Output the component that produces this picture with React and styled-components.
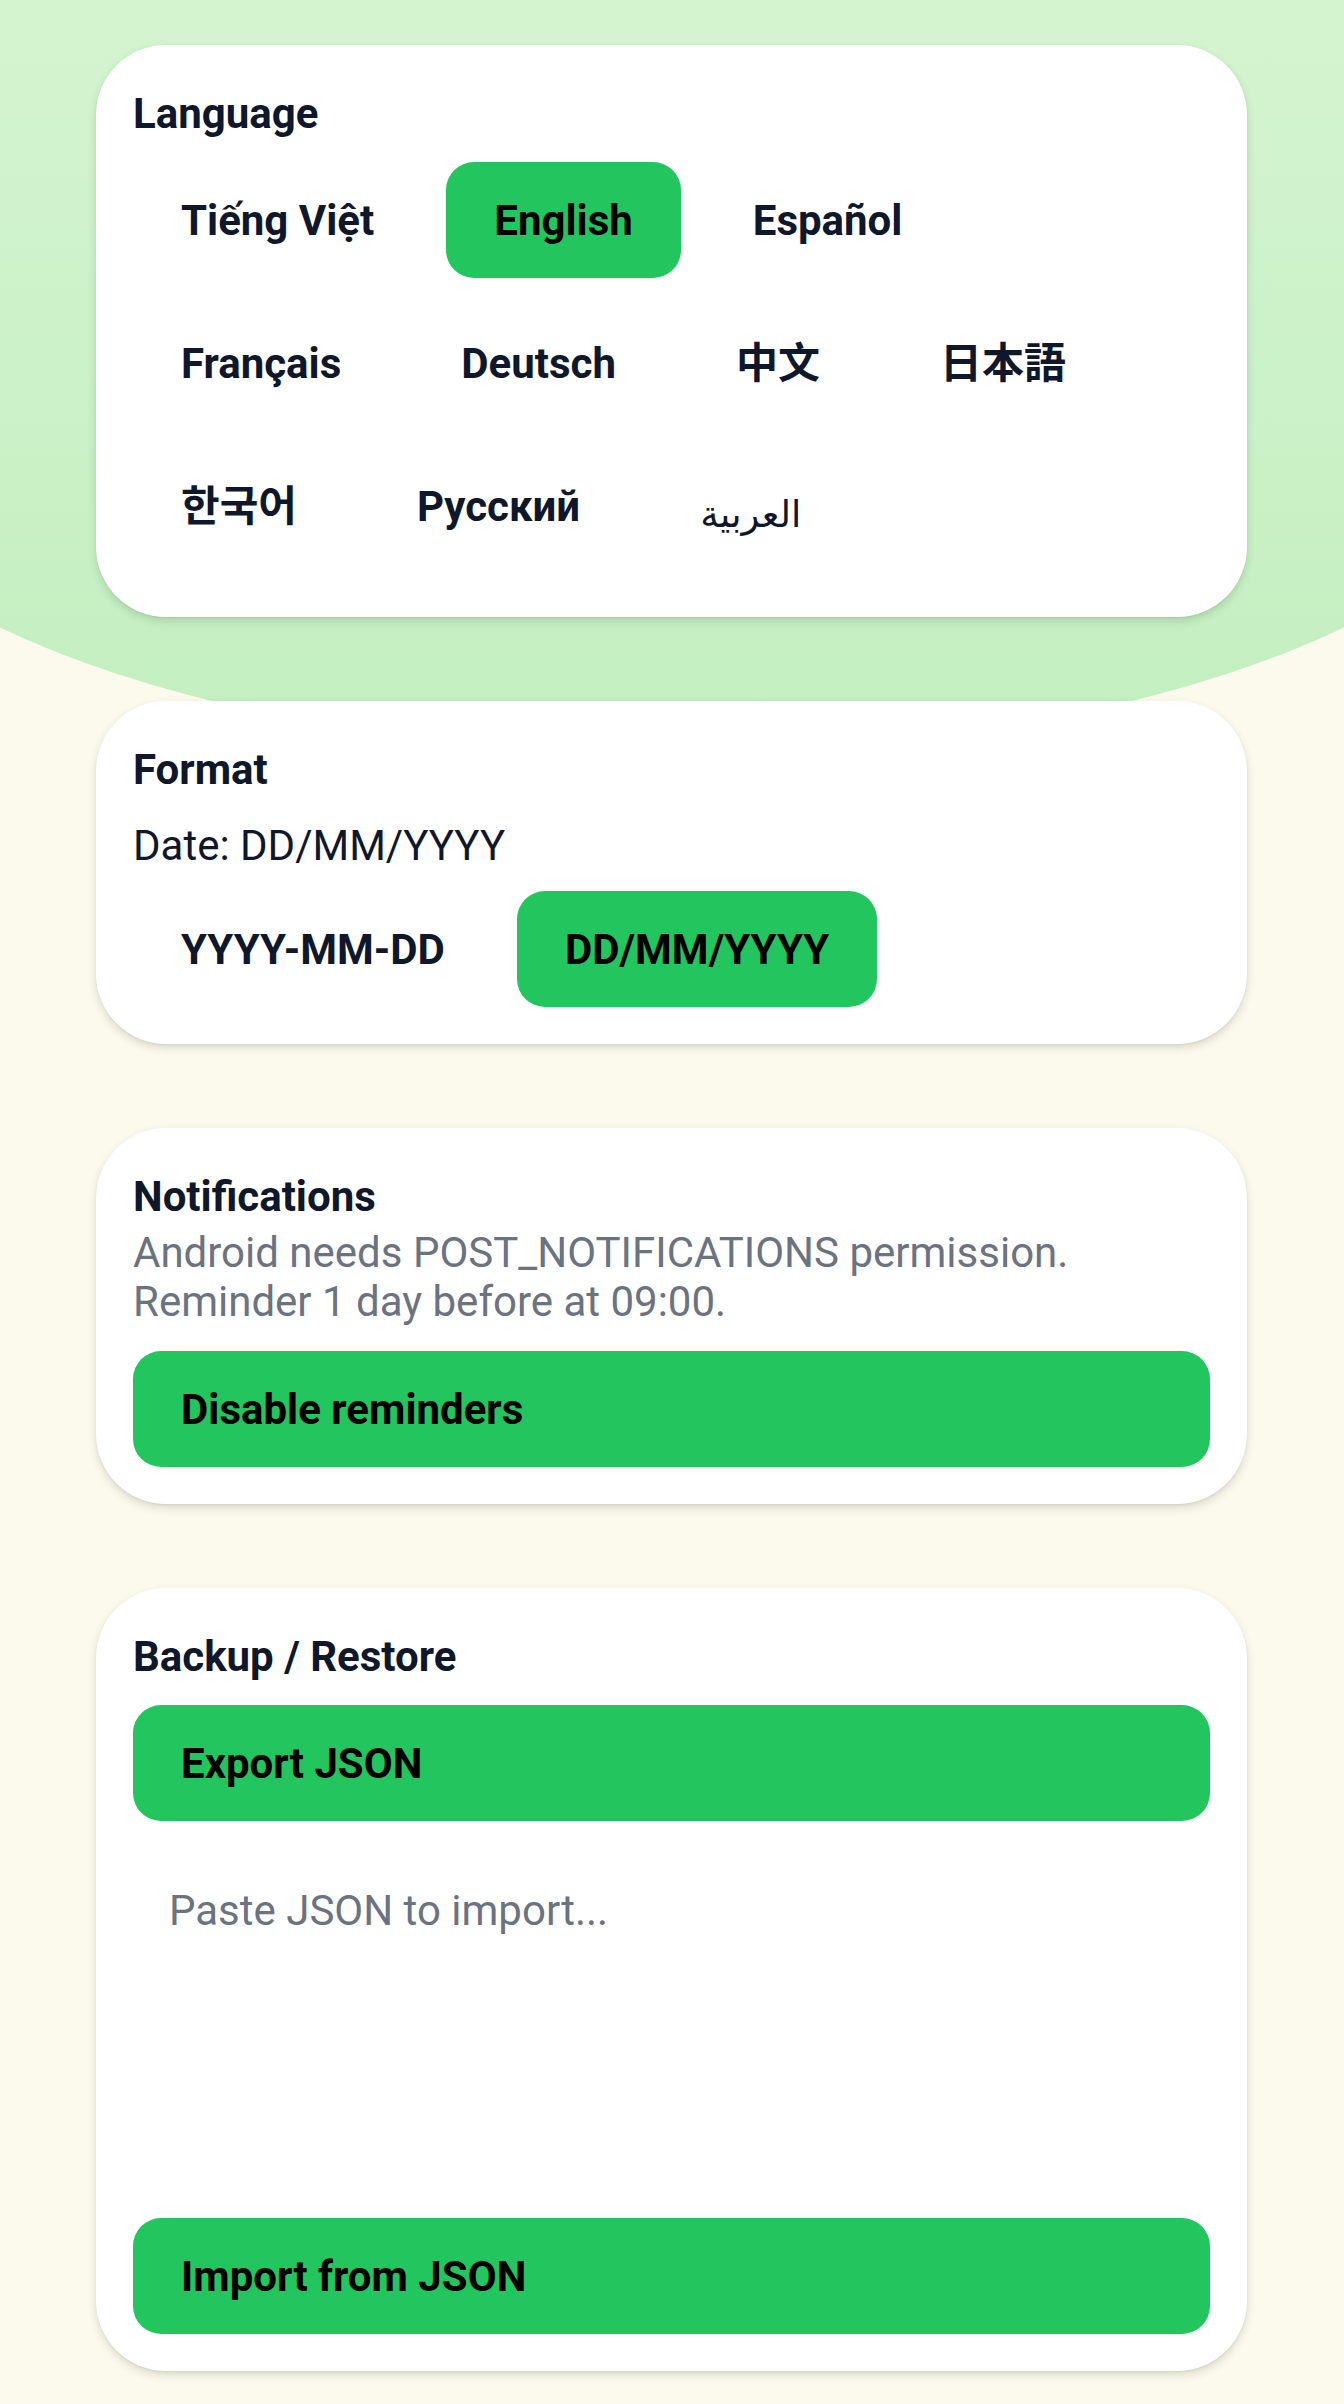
import React, { useState } from 'react';
import styled, { createGlobalStyle, css } from 'styled-components';

const color = {
  cream: '#fcfaed',
  white: '#ffffff',
  green: '#22c55e',
  ink: '#0f172a',
  muted: '#6b7280',
};

const GlobalStyle = createGlobalStyle`
  html, body {
    margin: 0;
    padding: 0;
    background: ${color.cream};
  }
  body {
    font-family: Roboto, "Noto Sans", "Noto Sans CJK KR", "Noto Sans CJK JP", "DejaVu Sans", sans-serif;
    color: ${color.ink};
  }
  * {
    box-sizing: border-box;
  }
`;

const Page = styled.div`
  position: relative;
  width: 1344px;
  height: 2404px;
  overflow: hidden;
  padding: 45px 97px 0 96px;
`;

// soft green hill behind the top of the screen
const Backdrop = styled.div`
  position: absolute;
  top: 0;
  left: -200px;
  width: 1744px;
  height: 753px;
  border-radius: 0 0 872px 872px / 0 0 346px 346px;
  background: linear-gradient(180deg, #d4f4d0 0%, #c3efc0 100%);
`;

const Stack = styled.div`
  position: relative;
  display: flex;
  flex-direction: column;
  gap: 84px;
`;

const Card = styled.section`
  display: flex;
  flex-direction: column;
  background: ${color.white};
  border-radius: 70px;
  padding: 37px;
  box-shadow: 0 4px 8px rgba(40, 50, 30, 0.16), 0 1px 2px rgba(0, 0, 0, 0.06);
`;

const Title = styled.h2`
  margin: 0;
  font-size: 42px;
  font-weight: 700;
  line-height: 63px;
  color: ${color.ink};
`;

const Body = styled.p`
  margin: ${({ $top }) => $top || 0}px 0 0;
  font-size: 42px;
  line-height: 49px;
  color: ${({ $muted }) => ($muted ? color.muted : color.ink)};
`;

const ChipWrap = styled.div`
  display: flex;
  flex-wrap: wrap;
  align-items: flex-start;
  column-gap: 24px;
  row-gap: 27px;
  margin-top: ${({ $top }) => $top || 17}px;
`;

const Chip = styled.button`
  border: none;
  margin: 0;
  padding: 26.5px 48px;
  border-radius: 28px;
  font-family: inherit;
  font-size: 42px;
  font-weight: 700;
  line-height: 63px;
  cursor: pointer;
  background: ${({ $active }) => ($active ? color.green : 'transparent')};
  color: ${({ $active }) => ($active ? '#000' : color.ink)};

  ${({ $arabic }) =>
    $arabic &&
    css`
      font-family: 'DejaVu Sans', sans-serif;
      font-size: 37px;
      font-weight: 400;
      line-height: 79px;
    `}
`;

const Action = styled.button`
  display: block;
  width: 100%;
  height: 116px;
  margin: ${({ $top }) => $top || 0}px 0 0;
  padding: 0 48px;
  border: none;
  border-radius: 28px;
  background: ${color.green};
  color: #000;
  font-family: inherit;
  font-size: 42px;
  font-weight: 700;
  text-align: left;
  cursor: pointer;
`;

const JsonInput = styled.textarea`
  display: block;
  width: 100%;
  height: 363px;
  margin: 17px 0 0;
  padding: 48px 36px;
  border: none;
  outline: none;
  resize: none;
  background: transparent;
  font-family: inherit;
  font-size: 42px;
  line-height: 49px;
  color: ${color.ink};

  &::placeholder {
    color: ${color.muted};
  }
`;

const languages = [
  { id: 'vi', label: 'Tiếng Việt' },
  { id: 'en', label: 'English' },
  { id: 'es', label: 'Español' },
  { id: 'fr', label: 'Français' },
  { id: 'de', label: 'Deutsch' },
  { id: 'zh', label: '中文' },
  { id: 'ja', label: '日本語' },
  { id: 'ko', label: '한국어' },
  { id: 'ru', label: 'Русский' },
  { id: 'ar', label: 'العربية' },
];

const formats = ['YYYY-MM-DD', 'DD/MM/YYYY'];

const App = () => {
  const [lang, setLang] = useState('en');
  const [format, setFormat] = useState('DD/MM/YYYY');
  const [json, setJson] = useState('');

  return (
    <>
      <GlobalStyle />
      <Page>
        <Backdrop />
        <Stack>
          <Card>
            <Title>Language</Title>
            <ChipWrap>
              {languages.map(({ id, label }) => (
                <Chip
                  key={id}
                  $active={lang === id}
                  $arabic={id === 'ar'}
                  lang={id}
                  onClick={() => setLang(id)}
                >
                  {label}
                </Chip>
              ))}
            </ChipWrap>
          </Card>

          <Card>
            <Title>Format</Title>
            <Body $top={20}>Date: {format}</Body>
            <ChipWrap $top={21}>
              {formats.map(f => (
                <Chip key={f} $active={format === f} onClick={() => setFormat(f)}>
                  {f}
                </Chip>
              ))}
            </ChipWrap>
          </Card>

          <Card>
            <Title>Notifications</Title>
            <Body $muted>
              Android needs POST_NOTIFICATIONS permission.
              <br />
              Reminder 1 day before at 09:00.
            </Body>
            <Action $top={25}>Disable reminders</Action>
          </Card>

          <Card>
            <Title>Backup / Restore</Title>
            <Action $top={17}>Export JSON</Action>
            <JsonInput
              placeholder="Paste JSON to import..."
              value={json}
              onChange={e => setJson(e.target.value)}
            />
            <Action $top={17}>Import from JSON</Action>
          </Card>
        </Stack>
      </Page>
    </>
  );
};

export default App;
